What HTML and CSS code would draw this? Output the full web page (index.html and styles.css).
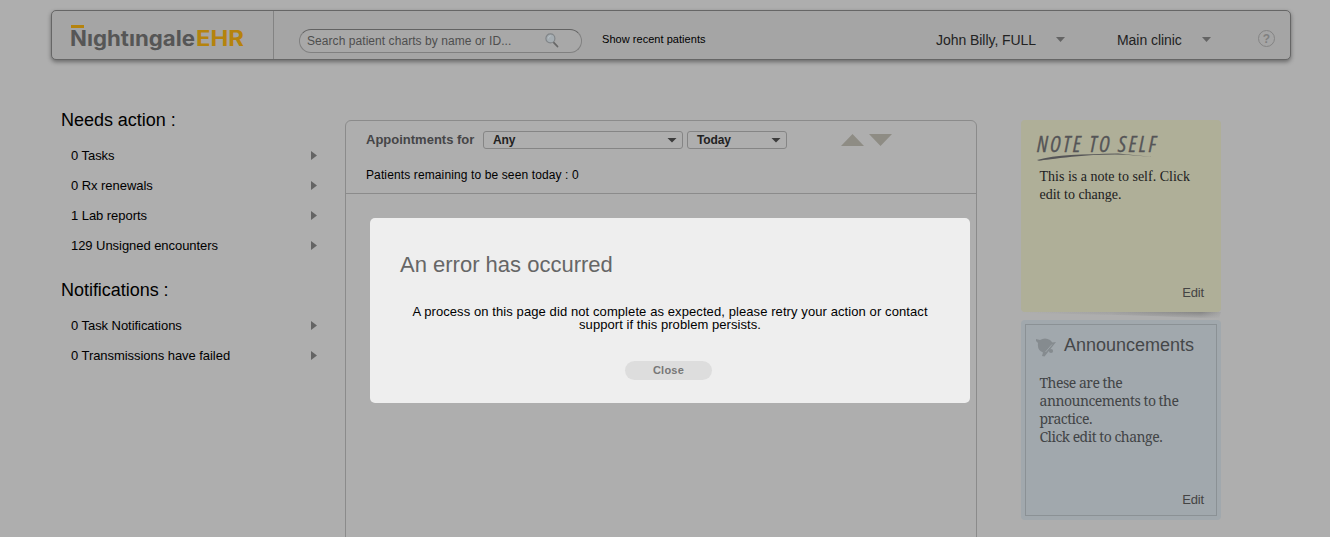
FILE: index.html
```html
<!DOCTYPE html>
<html lang="en">
<head>
<meta charset="utf-8">
<title>Nightingale EHR</title>
<link rel="stylesheet" href="styles.css">
</head>
<body>
<header class="topbar">
  <div class="brand">
    <svg class="logo" width="182" height="32" viewBox="0 0 182 32">
      <rect class="logo-accent" x="1" y="4" width="13" height="3"/>
      <text class="logo-name" x="0" y="25" textLength="125" lengthAdjust="spacingAndGlyphs">Nıghtıngale</text>
      <text class="logo-suffix" x="126" y="25" textLength="48" lengthAdjust="spacingAndGlyphs">EHR</text>
    </svg>
  </div>
  <div class="search">
    <span class="search-hint">Search patient charts by name or ID...</span>
    <svg width="14" height="16" viewBox="0 0 14 16"><path d="M8.6 9.300 12.500 13.500" stroke="#676767" stroke-width="1.800" stroke-linecap="round"/><circle cx="5.400" cy="5.400" r="4.500" fill="#a5adb2" stroke="#818588" stroke-width="1.200"/><path d="M3.400 5.500a2.600 2.600 0 0 1 2.400-2.700" fill="none" stroke="#b7c0c5"/></svg>
  </div>
  <a class="recent">Show recent patients</a>
  <div class="menu user"><span class="user-name">John Billy, FULL</span><i class="caret"></i></div>
  <div class="menu clinic"><span class="clinic-name">Main clinic</span><i class="caret"></i></div>
  <div class="help">?</div>
</header>
<main class="content">
  <aside class="sidebar">
    <h2 class="needs">Needs action :</h2>
    <ul>
      <li><span>0 Tasks</span><i class="arrow"></i></li>
      <li><span>0 Rx renewals</span><i class="arrow"></i></li>
      <li><span>1 Lab reports</span><i class="arrow"></i></li>
      <li><span>129 Unsigned encounters</span><i class="arrow"></i></li>
    </ul>
    <h2>Notifications :</h2>
    <ul>
      <li><span>0 Task Notifications</span><i class="arrow"></i></li>
      <li><span>0 Transmissions have failed</span><i class="arrow"></i></li>
    </ul>
  </aside>
  <section class="panel">
    <div class="panel-head">
      <div class="filters">
        <span class="label">Appointments for</span>
        <div class="select wide"><span>Any</span><i class="caret dark"></i></div>
        <div class="select"><span>Today</span><i class="caret dark"></i></div>
        <svg class="sorters" width="51" height="12" viewBox="0 0 51 12"><path d="M0 12 11.500 0 23 12zM28 0H51L39.500 12z" fill="#8e8c84"/></svg>
      </div>
      <p class="remaining">Patients remaining to be seen today : 0</p>
    </div>
  </section>
  <aside class="notes">
    <article class="note">
      <svg class="note-title" width="160" height="30" viewBox="0 0 160 30">
        <text class="hand" x="1" y="20" textLength="119" lengthAdjust="spacing">NOTE TO SELF</text>
        <path d="M1 28Q15 24 35 23T82 21.500L117 25 90 22.700Q62 22 36 24.800T3 28.800z" fill="#555557"/>
      </svg>
      <p class="note-text">This is a note to self. Click<br>edit to change.</p>
      <a class="edit">Edit</a>
    </article>
    <svg class="curl" width="200" height="8" viewBox="0 0 200 8">
      <defs><linearGradient id="fold" x1="0" x2="1" y1="0" y2="0"><stop offset="0" stop-color="#aeaeae"/><stop offset=".45" stop-color="#a2a2a2"/><stop offset=".9" stop-color="#858585"/><stop offset="1" stop-color="#a6a6a6"/></linearGradient>
      <linearGradient id="fade" x1="0" x2="0" y1="0" y2="1"><stop offset="0" stop-color="#aeaeae" stop-opacity="0"/><stop offset=".85" stop-color="#aeaeae"/></linearGradient></defs>
      <path d="M0 0H200L198 7Q130 3 0 1z" fill="url(#fold)"/><path d="M0 0H200V8H0z" fill="url(#fade)"/>
    </svg>
    <article class="board">
      <div class="board-inner">
        <h3><svg width="21" height="19" viewBox="0 0 21 19"><path d="M0 1 4 2Q9-1 14 2L16.500 4.500 20 4 8.500 18.500 6 18 7 14.500Q1 12 2 5L0 3z" fill="#858b8f"/><path d="M9.500 14 16 6.500" stroke="#a2a9ad" stroke-width=".8"/><circle cx="15" cy="13" r="2.100" fill="#858b8f"/></svg><span>Announcements</span></h3>
        <p class="board-text">These are the<br>announcements to the<br>practice.<br>Click edit to change.</p>
        <a class="edit">Edit</a>
      </div>
    </article>
  </aside>
</main>
<div class="dialog" role="dialog">
  <h1>An error has occurred</h1>
  <p class="message">A process on this page did not complete as expected, please retry your action or contact<br><span class="message-end">support if this problem persists.</span></p>
  <button>Close</button>
</div>
</body>
</html>
```

FILE: styles.css
```css
* { box-sizing: border-box; }
body {
  margin: 0;
  height: 537px;
  overflow: hidden;
  padding-top: 10px;
  background: #aeaeae;
  color: #000;
  font: 13px/18px "Liberation Sans", Arial, sans-serif;
}
h1, h2, h3, p, ul { margin: 0; padding: 0; font-weight: normal; }
.topbar {
  display: flex;
  width: 1240px;
  height: 50px;
  margin-left: 51px;
  background: #a5a5a5;
  border: 1px solid #666;
  border-radius: 5px;
  box-shadow: 0 2px 4px rgba(0, 0, 0, .4);
}
.brand { width: 222px; height: 48px; padding: 10px 0 0 18px; border-right: 1px solid #838383; }
.logo { display: block; font: 700 21px Inter, sans-serif; }
.logo-accent, .logo-suffix { fill: #b5830d; }
.logo-name { fill: #565656; }
.search {
  display: flex;
  align-items: center;
  justify-content: space-between;
  width: 283px;
  height: 24px;
  margin: 18px 0 0 25px;
  padding: 0 22px 0 7px;
  border: 1px solid #808080;
  border-top-color: #626262;
  border-radius: 12px;
  background: #a8a8a8;
  color: #4e4e4e;
  font-size: 12px;
}
.search-hint { letter-spacing: .06px; }
.recent { width: 334px; margin: 19px 0 0 20px; font-size: 11px; letter-spacing: .04px; }
.menu { display: flex; justify-content: space-between; height: 18px; margin-top: 20px; color: #222; font-size: 14px; letter-spacing: -.05px; }
.user { width: 129px; }
.clinic { width: 94px; margin-left: 52px; }
.caret { width: 9px; height: 5px; margin-top: 6px; background: #646464; clip-path: polygon(0 0, 100% 0, 50% 100%); }
.caret.dark { width: 10px; margin: 0; background: #3c3c3c; }
.help {
  width: 17px;
  height: 17px;
  margin: 19px 0 0 47px;
  border: 1px solid #848484;
  border-radius: 50%;
  color: #808080;
  font: bold 12px/16px "Liberation Sans", sans-serif;
  text-align: center;
}
.content { display: flex; height: 477px; }
.sidebar { width: 345px; padding: 40px 28px 0 61px; }
.sidebar h2 { height: 40px; margin-top: 10px; font-size: 18px; line-height: 41px; letter-spacing: -.03px; }
.sidebar h2.needs { margin-top: 0; }
.sidebar li { display: flex; align-items: center; justify-content: space-between; height: 30px; padding-left: 10px; letter-spacing: -.05px; }
.sidebar li span { padding-top: 2px; }
.arrow { width: 6px; height: 9px; margin-top: 1px; background: #646464; clip-path: polygon(0 0, 100% 50%, 0 100%); }
.panel { width: 632px; height: 440px; margin-top: 60px; border: 1px solid #8b8b8b; border-radius: 6px; }
.panel-head { height: 73px; padding: 9px 20px 0; border-bottom: 1px solid #8b8b8b; }
.filters { display: flex; align-items: center; height: 20px; }
.label { width: 117px; color: #454547; font-weight: bold; }
.select {
  display: flex;
  align-items: center;
  justify-content: space-between;
  width: 100px;
  height: 18px;
  margin-left: 4px;
  padding: 0 5px 0 9px;
  border: 1px solid #858585;
  border-radius: 3px;
  color: #222;
  font-size: 12px;
  font-weight: bold;
  letter-spacing: -.15px;
}
.select.wide { width: 200px; margin-left: 0; }
.sorters { margin-left: 54.400px; }
.remaining { margin-top: 16px; font-size: 12px; letter-spacing: .12px; }
.notes { width: 200px; margin: 60px 0 0 44px; }
.note { display: flex; flex-direction: column; height: 192px; padding: 12px 16px 10px 15px; border-radius: 4px; background: #afaf98; }
.note-title { display: block; overflow: visible; }
.hand { fill: #555557; stroke: #555557; stroke-width: .3px; font: italic 400 21.5px "Open Sans", sans-serif; font-stretch: 75%; }
.note-text { padding-left: 3.500px; margin-top: 6px; color: #202020; font: 14px/18px "Liberation Serif", serif; }
.edit { margin-top: auto; padding-right: 1px; text-align: right; color: #444; font-size: 13px; letter-spacing: -.15px; }
.curl { display: block; }
.board { height: 200px; padding: 4px; border-radius: 4px; background: #a1a8ad; }
.board-inner { display: flex; flex-direction: column; height: 192px; padding: 8px 11px 6px 10px; border: 1px solid #8b9195; }
.board h3 { display: flex; gap: 7px; height: 25px; color: #454749; font-size: 18px; line-height: 24px; }
.board h3 svg { margin-top: 5px; }
.board-text { padding: 16px 0 0 3.500px; color: #424446; font: 14px/18px "Noto Serif", "DejaVu Serif", serif; letter-spacing: -.5px; }
.dialog {
  position: absolute;
  left: 370px;
  top: 218px;
  width: 600px;
  height: 185px;
  padding: 33px 30px 0;
  border-radius: 5px;
  background: #eee;
}
.dialog h1 { height: 28px; color: #666; font-size: 22px; line-height: 28px; }
.message { margin-top: 26px; line-height: 13px; text-align: center; letter-spacing: .09px; }
.message-end { letter-spacing: .06px; }
.dialog button {
  display: block;
  width: 87px;
  height: 19px;
  margin: 30px auto 0 225px;
  padding: 0;
  border: 0;
  border-radius: 10px;
  background: #ddd;
  color: #777;
  font: bold 11px/19px "Liberation Sans", sans-serif;
  letter-spacing: .25px;
}
```
